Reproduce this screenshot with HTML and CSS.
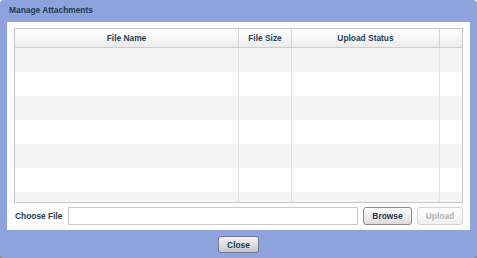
FILE: index.html
```html
<!DOCTYPE html>
<html>
<head>
<meta charset="utf-8">
<link rel="stylesheet" href="styles.css">
</head>
<body>
<div class="dialog">
  <div class="title">Manage Attachments</div>
  <div class="panel">
    <div class="grid">
      <div class="head">
        <div class="cell c1">File Name</div>
        <div class="cell c2">File Size</div>
        <div class="cell c3">Upload Status</div>
        <div class="cell c4"></div>
      </div>
      <div class="body">
        <div class="row alt"><div class="cell c1"></div><div class="cell c2"></div><div class="cell c3"></div><div class="cell c4"></div></div>
        <div class="row"><div class="cell c1"></div><div class="cell c2"></div><div class="cell c3"></div><div class="cell c4"></div></div>
        <div class="row alt"><div class="cell c1"></div><div class="cell c2"></div><div class="cell c3"></div><div class="cell c4"></div></div>
        <div class="row"><div class="cell c1"></div><div class="cell c2"></div><div class="cell c3"></div><div class="cell c4"></div></div>
        <div class="row alt"><div class="cell c1"></div><div class="cell c2"></div><div class="cell c3"></div><div class="cell c4"></div></div>
        <div class="row"><div class="cell c1"></div><div class="cell c2"></div><div class="cell c3"></div><div class="cell c4"></div></div>
        <div class="row alt"><div class="cell c1"></div><div class="cell c2"></div><div class="cell c3"></div><div class="cell c4"></div></div>
      </div>
    </div>
    <div class="chooser">
      <label class="label">Choose File</label>
      <input class="field" type="text">
      <button class="btn browse">Browse</button>
      <button class="btn upload" disabled>Upload</button>
    </div>
  </div>
  <div class="footer">
    <button class="btn close">Close</button>
  </div>
</div>
</body>
</html>
```

FILE: styles.css
```css
html, body {
  margin: 0;
  padding: 0;
}
body {
  width: 477px;
  height: 258px;
  background: linear-gradient(#ffffff 0 50%, #8a8a8a 50% 100%);
  font-family: "Liberation Sans", Arial, sans-serif;
  overflow: hidden;
}
.dialog {
  width: 477px;
  height: 258px;
  box-sizing: border-box;
  background: #8ea2dd;
  border-radius: 4px;
  display: flex;
  flex-direction: column;
}
.title {
  height: 22px;
  line-height: 21px;
  padding-left: 9px;
  font-size: 8.4px;
  font-weight: bold;
  color: #1f3a52;
}
.panel {
  margin: 0 7px;
  height: 208px;
  box-sizing: border-box;
  background: #ffffff;
  padding: 6px 7px 0 7px;
  display: flex;
  flex-direction: column;
}
.grid {
  height: 175px;
  box-sizing: border-box;
  border: 1px solid #c6c6c6;
  display: flex;
  flex-direction: column;
}
.head, .row {
  display: grid;
  grid-template-columns: 224px 53px 148px 1fr;
}
.head {
  height: 19px;
  box-sizing: border-box;
  border-bottom: 1px solid #cfcfcf;
  background: linear-gradient(#ffffff, #ececec);
}
.head .cell {
  font-size: 8.4px;
  font-weight: bold;
  color: #2a4256;
  text-align: center;
  line-height: 18px;
  border-right: 1px solid #d4d4d4;
}
.head .c4 {
  border-right: none;
}
.body {
  flex: 1;
  overflow: hidden;
}
.row {
  height: 24px;
  background: #ffffff;
}
.row.alt {
  background: #f5f5f5;
}
.row .cell {
  border-right: 1px solid #e2e2e2;
}
.row .c4 {
  border-right: none;
}
.chooser {
  margin-top: 4px;
  display: flex;
  align-items: flex-start;
  height: 19px;
}
.label {
  width: 53px;
  padding-left: 1px;
  font-size: 8.4px;
  font-weight: bold;
  color: #1f3a52;
  line-height: 18px;
}
.field {
  flex: 1;
  height: 18px;
  box-sizing: border-box;
  margin: 0 5px 0 0;
  border: 1px solid #c9c9c9;
  padding: 0 3px;
  background: #ffffff;
  outline: none;
}
.btn {
  box-sizing: border-box;
  margin: 0;
  padding: 0;
  font-family: "Liberation Sans", Arial, sans-serif;
  font-size: 8.4px;
  font-weight: bold;
  border-radius: 3px;
  cursor: default;
}
.browse {
  width: 49px;
  height: 18px;
  margin-right: 5px;
  border: 1px solid #8a8a8a;
  background: linear-gradient(#ffffff, #dcdcdc);
  color: #1f3a52;
}
.upload {
  width: 46px;
  height: 18px;
  border: 1px solid #d2d2d2;
  background: linear-gradient(#ffffff, #f0f0f0);
  color: #b4b4b4;
}
.footer {
  flex: 1;
  display: flex;
  justify-content: center;
  padding-top: 6px;
}
.close {
  width: 41px;
  height: 17px;
  border: 1px solid #6f7890;
  background: linear-gradient(#f4f4f4, #c6c8d0);
  color: #1f3a52;
}
```
